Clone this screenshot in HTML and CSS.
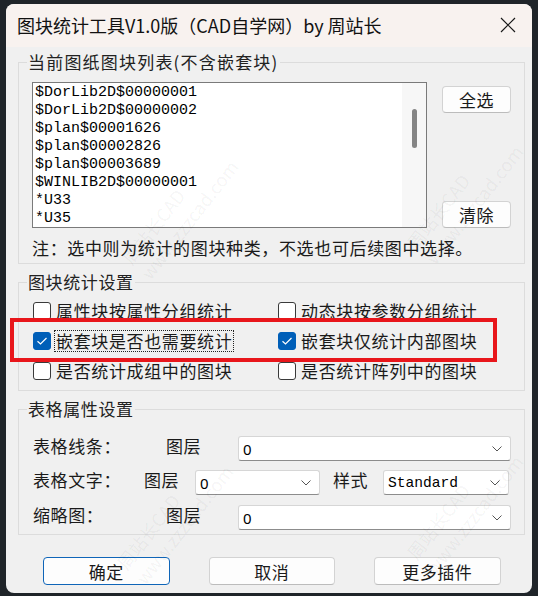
FILE: index.html
```html
<!DOCTYPE html>
<html lang="zh-CN">
<head>
<meta charset="utf-8">
<title>图块统计工具</title>
<link rel="stylesheet" href="styles.css">
</head>
<body>
<div class="window">
  <div class="titlebar">
    <span class="title">图块统计工具V1.0版（CAD自学网）by 周站长</span>
    <svg class="close" width="16" height="16" viewBox="0 0 16 16"><path d="M1 1L15 15M15 1L1 15" stroke="#1a1a1a" stroke-width="1.2" fill="none"/></svg>
  </div>

  <fieldset class="group g1">
    <legend>当前图纸图块列表(不含嵌套块)</legend>
    <div class="g1-row">
      <div class="listbox">
        <div class="items">
          <div>$DorLib2D$00000001</div>
          <div>$DorLib2D$00000002</div>
          <div>$plan$00001626</div>
          <div>$plan$00002826</div>
          <div>$plan$00003689</div>
          <div>$WINLIB2D$00000001</div>
          <div>*U33</div>
          <div>*U35</div>
        </div>
        <div class="scroll"><div class="thumb"></div></div>
      </div>
      <div class="side-btns">
        <div class="btn side">全选</div>
        <div class="btn side">清除</div>
      </div>
    </div>
    <p class="note">注：选中则为统计的图块种类，不选也可后续图中选择。</p>
  </fieldset>

  <fieldset class="group g2">
    <legend>图块统计设置</legend>
    <div class="checks">
      <div class="check"><span class="box"></span><span class="lbl">属性块按属性分组统计</span></div>
      <div class="check"><span class="box"></span><span class="lbl">动态块按参数分组统计</span></div>
      <div class="check"><span class="box on"><svg width="12" height="10" viewBox="0 0 12 10"><path d="M1.5 5.2L4.5 8L10.5 2" stroke="#fff" stroke-width="1.2" fill="none"/></svg></span><span class="lbl focus">嵌套块是否也需要统计</span></div>
      <div class="check"><span class="box on"><svg width="12" height="10" viewBox="0 0 12 10"><path d="M1.5 5.2L4.5 8L10.5 2" stroke="#fff" stroke-width="1.2" fill="none"/></svg></span><span class="lbl">嵌套块仅统计内部图块</span></div>
      <div class="check"><span class="box"></span><span class="lbl">是否统计成组中的图块</span></div>
      <div class="check"><span class="box"></span><span class="lbl">是否统计阵列中的图块</span></div>
    </div>
  </fieldset>

  <fieldset class="group g3">
    <legend>表格属性设置</legend>
    <div class="frow r1">
      <span class="flabel w133">表格线条：</span>
      <span class="flabel w72">图层</span>
      <div class="combo w273"><span class="val">0</span><svg class="chev" width="10" height="6" viewBox="0 0 10 6"><path d="M0.5 0.5L5 5L9.5 0.5" stroke="#555" stroke-width="1" fill="none"/></svg></div>
    </div>
    <div class="frow r2">
      <span class="flabel w111">表格文字：</span>
      <span class="flabel w51">图层</span>
      <div class="combo w125"><span class="val">0</span><svg class="chev" width="10" height="6" viewBox="0 0 10 6"><path d="M0.5 0.5L5 5L9.5 0.5" stroke="#555" stroke-width="1" fill="none"/></svg></div>
      <span class="flabel w50 ml13">样式</span>
      <div class="combo w126"><span class="val mono">Standard</span><svg class="chev" width="10" height="6" viewBox="0 0 10 6"><path d="M0.5 0.5L5 5L9.5 0.5" stroke="#555" stroke-width="1" fill="none"/></svg></div>
    </div>
    <div class="frow r3">
      <span class="flabel w133">缩略图：</span>
      <span class="flabel w72">图层</span>
      <div class="combo w273"><span class="val">0</span><svg class="chev" width="10" height="6" viewBox="0 0 10 6"><path d="M0.5 0.5L5 5L9.5 0.5" stroke="#555" stroke-width="1" fill="none"/></svg></div>
    </div>
  </fieldset>

  <div class="actions">
    <div class="btn big default">确定</div>
    <div class="btn big">取消</div>
    <div class="btn big">更多插件</div>
  </div>

  <div class="highlight"></div>

  <div class="wm wm1"><div>周站长CAD</div><div>www.zzzcad.com</div></div>
  <div class="wm wm2"><div>周站长CAD</div><div>www.zzzcad.com</div></div>
  <div class="wm wm3"><div>周站长CAD</div><div>www.zzzcad.com</div></div>
  <div class="wm wm4"><div>周站长CAD</div><div>www.zzzcad.com</div></div>
</div>
</body>
</html>
```

FILE: styles.css
```css
* { box-sizing: border-box; }

html, body {
  margin: 0;
  padding: 0;
  background: #1f2429;
  width: 538px;
  height: 596px;
  overflow: hidden;
}

body {
  font-family: "Noto Sans CJK SC", "Noto Sans", sans-serif;
  color: #1a1a1a;
  padding: 4px 0 0 6px;
}

.window {
  position: relative;
  width: 526px;
  height: 589px;
  background: #f0f0f0;
  border-radius: 8px;
  overflow: hidden;
}

.titlebar {
  height: 43px;
  background: #f8f2ef;
  display: flex;
  align-items: center;
  padding-left: 11px;
  padding-bottom: 2px;
}

.title {
  font-size: 18px;
  line-height: 20px;
  color: #111;
  white-space: nowrap;
}

.close {
  margin-left: auto;
  margin-right: 16px;
}

.group {
  margin: 0 7px 0 12px;
  padding: 0;
  border: 1px solid #dcdcdc;
  min-width: 0;
}

.group legend {
  font-size: 17px;
  line-height: 20px;
  padding: 0 1px;
  margin-left: 8px;
  color: #222;
  letter-spacing: 0.6px;
}

.g1 { margin-top: 5px; }
.g1 legend { letter-spacing: 1.2px; }

.g1-row {
  display: flex;
  padding: 10px 13px 0 13px;
  gap: 15px;
}

.listbox {
  width: 395px;
  height: 146px;
  border: 1px solid #7a7a7a;
  background: #fff;
  display: flex;
}

.items {
  flex: 1;
  padding: 1px 2px 0;
  font-family: "Liberation Mono", monospace;
  font-size: 15px;
  line-height: 18px;
  color: #000;
}

.scroll {
  width: 24px;
  background: #f7f7f7;
  padding-top: 26px;
}

.thumb {
  width: 5px;
  height: 39px;
  margin-left: 10px;
  background: #858585;
  border-radius: 3px;
}

.side-btns {
  width: 69px;
  display: flex;
  flex-direction: column;
  justify-content: space-between;
  padding-top: 4px;
}

.btn {
  background: #fdfdfd;
  border: 1px solid #d3d3d3;
  border-bottom-color: #bcbcbc;
  border-radius: 4px;
  display: flex;
  align-items: center;
  justify-content: center;
  font-size: 17px;
  color: #1a1a1a;
  letter-spacing: 0.5px;
}

.btn.side {
  height: 27px;
}

.note {
  margin: 10px 0 0 13px;
  padding: 0 0 5px 0;
  font-size: 17px;
  line-height: 20px;
  letter-spacing: 0.64px;
  white-space: nowrap;
}

.g2 { margin-top: 8px; }

.checks {
  display: grid;
  grid-template-columns: 245px 1fr;
  grid-auto-rows: 30px;
  padding: 4px 0 4px 14px;
}

.check {
  display: flex;
  align-items: center;
}

.box {
  width: 18px;
  height: 18px;
  border: 1px solid #3a3a3a;
  border-radius: 3px;
  background: #fff;
  display: flex;
  align-items: center;
  justify-content: center;
  flex: none;
}

.box.on {
  background: #005fb8;
  border-color: #005fb8;
}

.lbl {
  margin-left: 5px;
  font-size: 17px;
  line-height: 18px;
  letter-spacing: 0.64px;
  white-space: nowrap;
}

.lbl.focus {
  outline: 1px dotted #222;
  outline-offset: 1px;
}

.g3 { margin-top: 8px; }

.frow {
  display: flex;
  align-items: flex-start;
  height: 25px;
  padding-left: 14px;
}

.g3 .r1 { margin-top: 17px; }
.g3 .r2 { margin-top: 9px; }
.g3 .r3 { margin-top: 10px; margin-bottom: 4px; }

.flabel {
  font-size: 17px;
  line-height: 20px;
  letter-spacing: 0.6px;
  white-space: nowrap;
  flex: none;
}

.w133 { width: 133px; }
.w72 { width: 72px; }
.w111 { width: 111px; }
.w51 { width: 51px; }
.w50 { width: 50px; }
.ml13 { margin-left: 13px; }

.combo {
  height: 25px;
  background: #fff;
  border: 1px solid #d6d6d6;
  border-bottom-color: #8c8c8c;
  border-radius: 3px;
  display: flex;
  align-items: center;
  padding: 0 8px 0 4px;
  flex: none;
}

.w273 { width: 273px; }
.w125 { width: 125px; }
.w126 { width: 126px; }

.val {
  font-family: "Noto Sans", sans-serif;
  font-size: 15px;
  line-height: 20px;
  color: #000;
}

.val.mono {
  font-family: "Liberation Mono", monospace;
  font-size: 14.6px;
}

.chev {
  margin-left: auto;
}

.actions {
  display: flex;
  gap: 39px;
  padding-left: 37px;
  margin-top: 22px;
}

.btn.big {
  width: 126.5px;
  height: 28px;
}

.btn.default {
  border: 1px solid #0f65b8;
}

.highlight {
  position: absolute;
  left: 4px;
  top: 314px;
  width: 487px;
  height: 44px;
  border: 4px solid #e8161b;
  pointer-events: none;
}

.wm {
  position: absolute;
  font-family: "Noto Sans CJK SC", "Noto Sans", sans-serif;
  font-size: 18px;
  line-height: 24px;
  color: rgba(0, 0, 0, 0.05);
  transform: rotate(-52deg);
  transform-origin: left top;
  white-space: nowrap;
  pointer-events: none;
}

.wm1 { left: 110px; top: 250px; }
.wm2 { left: 395px; top: 235px; }
.wm3 { left: 105px; top: 555px; }
.wm4 { left: 395px; top: 545px; }
```
